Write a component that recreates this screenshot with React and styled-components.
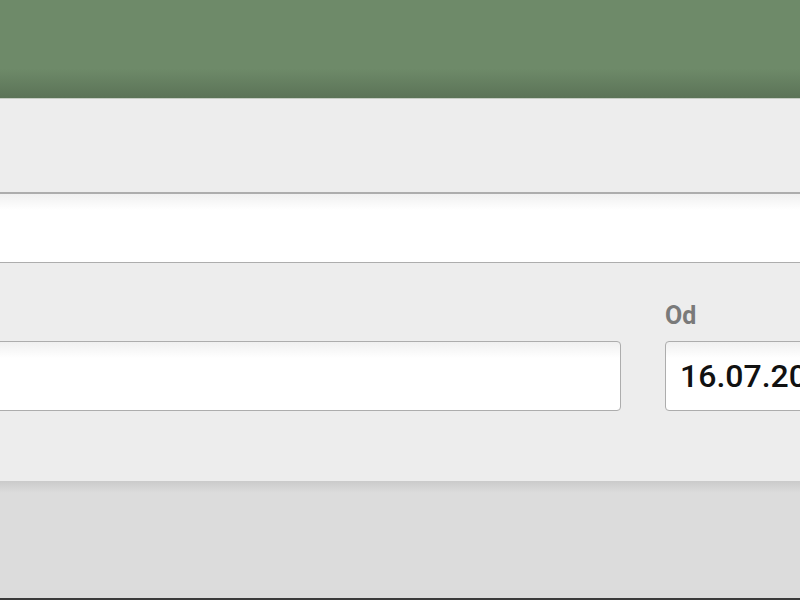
import styled, { createGlobalStyle } from 'styled-components';

const GlobalStyle = createGlobalStyle`
  html, body {
    margin: 0;
    padding: 0;
    height: 100%;
    overflow: hidden;
    background: #dcdcdc;
  }
  #root {
    height: 100%;
  }
`;

const Page = styled.div`
  display: flex;
  flex-direction: column;
  height: 100vh;
  font-family: Roboto, "Liberation Sans", Arial, sans-serif;
`;

const Header = styled.header`
  height: 98px;
  flex-shrink: 0;
  background: linear-gradient(to bottom, #6e8a69 0%, #6e8a69 70%, #5b7357 100%);
  border-bottom: 1px solid #c5ccc3;
`;

const Panel = styled.section`
  background: #ededed;
  height: 382px;
  flex-shrink: 0;
  overflow: hidden;
`;

const Form = styled.div`
  width: calc(100% + 160px);
  margin-left: -40px;
  padding-top: 93px;
  display: flex;
  flex-direction: column;
  gap: 40px;
`;

const Row = styled.div`
  display: grid;
  grid-template-columns: 1fr 255px;
  column-gap: 44px;
  align-items: end;
`;

const Field = styled.div`
  display: flex;
  flex-direction: column;
  gap: 12px;
`;

const Label = styled.label`
  font-size: 25px;
  font-weight: 700;
  color: #7a7a7a;
  line-height: 26px;
  height: 26px;
`;

const Input = styled.div`
  box-sizing: border-box;
  height: ${(p) => (p.$tall ? 71 : 70)}px;
  border: 1px solid #adadad;
  border-top-width: ${(p) => (p.$tall ? 2 : 1)}px;
  border-radius: ${(p) => (p.$tall ? 0 : 4)}px;
  background: linear-gradient(to bottom, #f0f0f0 0px, #ffffff 16px, #ffffff 100%);
  padding: 0 14px;
  display: flex;
  align-items: center;
  font-size: 32px;
  font-weight: 500;
  color: #111;
  white-space: nowrap;
  overflow: hidden;
`;

const Footer = styled.div`
  flex: 1;
  background: linear-gradient(to bottom, #cacaca 0px, #dcdcdc 12px, #dcdcdc 100%);
  border-bottom: 2px solid #3a3a3a;
`;

const App = () => {
  return (
    <Page>
      <GlobalStyle />
      <Header />
      <Panel>
        <Form>
          <Input $tall />
          <Row>
            <Input />
            <Field>
              <Label>Od</Label>
              <Input>16.07.2014</Input>
            </Field>
          </Row>
        </Form>
      </Panel>
      <Footer />
    </Page>
  );
};

export default App;
